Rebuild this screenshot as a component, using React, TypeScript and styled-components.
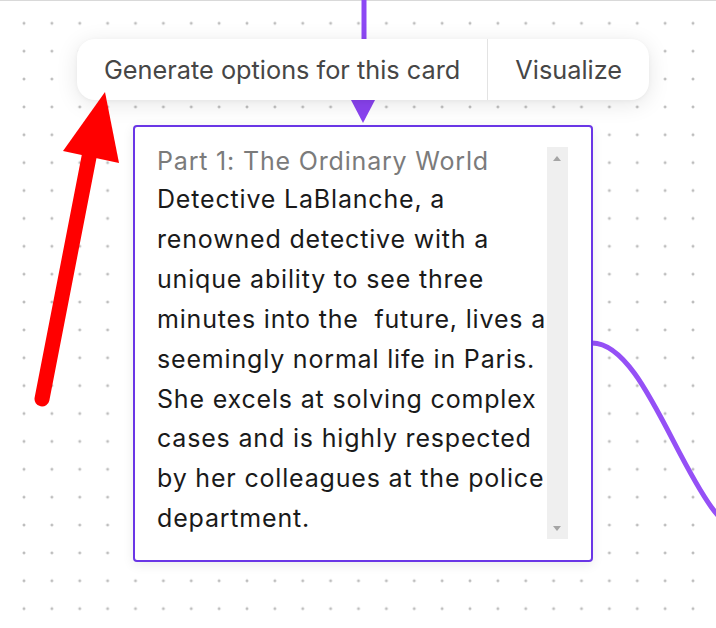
import React from "react";
import styled, { createGlobalStyle } from "styled-components";

const GlobalStyle = createGlobalStyle`
  html, body {
    margin: 0;
    padding: 0;
    background: #ffffff;
  }
  body {
    font-family: "Inter", "Noto Sans", sans-serif;
  }
`;

const GRID = 27.875;

const bodyLines = [
  "Detective LaBlanche, a",
  "renowned detective with a",
  "unique ability to see three",
  "minutes into the  future, lives a",
  "seemingly normal life in Paris.",
  "She excels at solving complex",
  "cases and is highly respected",
  "by her colleagues at the police",
  "department.",
];

const App: React.FC = () => {
  return (
    <>
      <GlobalStyle />
      <Canvas>
        <EdgeLayer viewBox="0 0 716 628" width="716" height="628">
          <path d="M364 0 L364 40" stroke="#8d48f4" strokeWidth="5" fill="none" />
          <polygon points="351,100 375,100 363,123" fill="#8a43f0" />
          <path
            d="M592 343 C653 343 693 537 753 537"
            stroke="#9550f6"
            strokeWidth="5"
            fill="none"
          />
        </EdgeLayer>

        <NodeToolbar>
          <ToolbarButton>Generate options for this card</ToolbarButton>
          <ToolbarButton $divider>Visualize</ToolbarButton>
        </NodeToolbar>

        <Card>
          <CardRow>
            <TextColumn>
              <Title>Part 1: The Ordinary World</Title>
              <Body>{bodyLines.join("\n")}</Body>
            </TextColumn>
            <ScrollTrack>
              <ScrollArrow $dir="up" />
              <ScrollArrow $dir="down" />
            </ScrollTrack>
          </CardRow>
        </Card>

        <Annotation viewBox="0 0 716 628" width="716" height="628">
          <line
            x1="42"
            y1="399"
            x2="90"
            y2="152"
            stroke="#ff0000"
            strokeWidth="15"
            strokeLinecap="round"
          />
          <polygon points="105,92 63,151 119,163" fill="#ff0000" />
        </Annotation>
      </Canvas>
    </>
  );
};

export default App;

const Canvas = styled.div`
  position: relative;
  width: 716px;
  height: 628px;
  overflow: hidden;
  background-color: #ffffff;
  background-image: radial-gradient(
    circle,
    #bdbdbd 0,
    #bdbdbd 1.1px,
    rgba(189, 189, 189, 0) 1.8px
  );
  background-size: ${GRID}px ${GRID}px;
  background-position: ${24 - GRID / 2}px ${23.3 - GRID / 2}px;
  box-shadow: inset 0 1px 0 #d9d9d9;
`;

const EdgeLayer = styled.svg`
  position: absolute;
  left: 0;
  top: 0;
  pointer-events: none;
`;

const Annotation = styled.svg`
  position: absolute;
  left: 0;
  top: 0;
  pointer-events: none;
  z-index: 5;
`;

const NodeToolbar = styled.div`
  position: absolute;
  left: 77px;
  top: 39px;
  height: 61px;
  display: flex;
  align-items: stretch;
  background: #ffffff;
  border-radius: 18px;
  box-shadow: 0 4px 22px rgba(0, 0, 0, 0.1), 0 1px 4px rgba(0, 0, 0, 0.04);
  z-index: 3;
`;

const ToolbarButton = styled.div<{ $divider?: boolean }>`
  display: flex;
  align-items: center;
  padding: 0 27px;
  font-size: 25.3px;
  color: #464646;
  white-space: nowrap;
  border-left: ${(p) => (p.$divider ? "1px solid #e3e3e3" : "none")};
`;

const Card = styled.div`
  position: absolute;
  left: 133px;
  top: 125px;
  width: 460px;
  box-sizing: border-box;
  padding: 15px 23px 21px 22px;
  background: #ffffff;
  border: 2px solid #6a36e6;
  border-radius: 4px;
  box-shadow: 0 3px 12px rgba(0, 0, 0, 0.08);
  z-index: 2;
`;

const CardRow = styled.div`
  display: flex;
  align-items: stretch;
`;

const TextColumn = styled.div`
  flex: 1;
  min-width: 0;
  font-size: 25px;
  letter-spacing: 0.82px;
`;

const Title = styled.div`
  line-height: 38px;
  color: #7b7b7b;
  white-space: nowrap;
`;

const Body = styled.div`
  line-height: 39.9px;
  color: #1a1a1a;
  white-space: pre;
`;

const ScrollTrack = styled.div`
  width: 21.5px;
  margin-top: 5px;
  background: #efefef;
  display: flex;
  flex-direction: column;
  justify-content: space-between;
  align-items: center;
  padding: 9px 0 8px;
`;

const ScrollArrow = styled.div<{ $dir: "up" | "down" }>`
  width: 0;
  height: 0;
  border-left: 4px solid transparent;
  border-right: 4px solid transparent;
  ${(p) =>
    p.$dir === "up"
      ? "border-bottom: 5px solid #a5a5a5;"
      : "border-top: 5px solid #a5a5a5;"}
`;
